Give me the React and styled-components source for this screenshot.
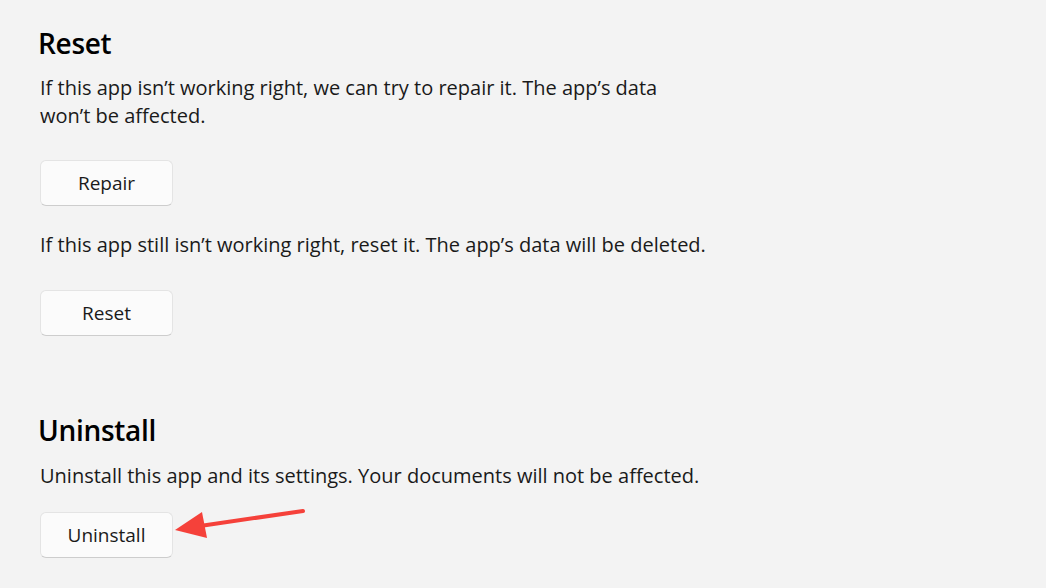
import React from "react";
import styled, { createGlobalStyle } from "styled-components";

const GlobalStyle = createGlobalStyle`
  html, body {
    margin: 0;
    padding: 0;
    background: #f3f3f3;
  }
  body {
    font-family: "Open Sans", "Noto Sans", sans-serif;
    color: #1b1b1b;
  }
`;

const Page = styled.div`
  position: relative;
  width: 1046px;
  height: 588px;
  overflow: hidden;
  padding: 25px 0 0 38px;
  box-sizing: border-box;
  display: flex;
  flex-direction: column;
`;

const Section = styled.section`
  display: flex;
  flex-direction: column;
  align-items: flex-start;
  margin-top: ${(p) => p.$top || 0}px;
`;

const Title = styled.h2`
  margin: 0;
  font-size: 28px;
  line-height: 36px;
  font-weight: 600;
  color: #000;
  letter-spacing: -0.3px;
`;

const Text = styled.p`
  margin: ${(p) => p.$top || 0}px 0 0 2px;
  font-size: 20px;
  line-height: 28px;
  max-width: ${(p) => p.$max || 900}px;
  color: #1a1a1a;
`;

const Button = styled.button`
  margin: ${(p) => p.$top || 0}px 0 0 2px;
  width: 133px;
  height: 46px;
  box-sizing: border-box;
  background: #fbfbfb;
  border: 1px solid #e4e4e4;
  border-bottom-color: #cdcdcd;
  border-radius: 6px;
  font-family: inherit;
  font-size: 19px;
  color: #1a1a1a;
  cursor: pointer;
`;

const Arrow = styled.svg`
  position: absolute;
  left: 170px;
  top: 500px;
`;

export default function App() {
  return (
    <>
      <GlobalStyle />
      <Page>
        <Section>
          <Title>Reset</Title>
          <Text $top={13} $max={640}>
            If this app isn’t working right, we can try to repair it. The app’s
            data won’t be affected.
          </Text>
          <Button $top={30}>Repair</Button>
          <Text $top={25}>
            If this app still isn’t working right, reset it. The app’s data will
            be deleted.
          </Text>
          <Button $top={31}>Reset</Button>
        </Section>
        <Section $top={76}>
          <Title>Uninstall</Title>
          <Text $top={14}>
            Uninstall this app and its settings. Your documents will not be
            affected.
          </Text>
          <Button $top={22}>Uninstall</Button>
        </Section>
        <Arrow width="140" height="45" viewBox="0 0 140 45">
          <line x1="133" y1="11" x2="30" y2="26" stroke="#f5413a" strokeWidth="4" strokeLinecap="round" />
          <polygon points="5,30 32,12 37,38" fill="#f5413a" />
        </Arrow>
      </Page>
    </>
  );
}
